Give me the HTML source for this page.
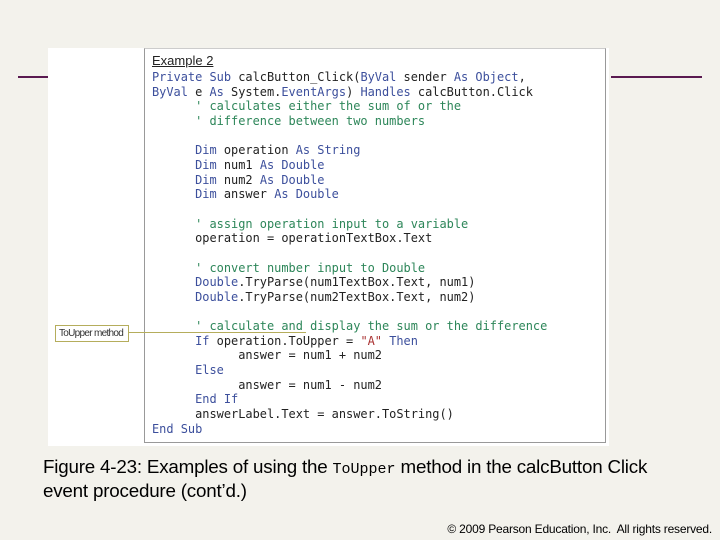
<!DOCTYPE html>
<html><head><style>
body{margin:0;width:720px;height:540px;background:#f3f2ec;position:relative;overflow:hidden;font-family:"Liberation Sans",sans-serif}
.pl{position:absolute;height:2px;background:#5a1a50;top:76px}
#img{position:absolute;left:48px;top:48px;width:561px;height:398px;background:#fff}
#box{position:absolute;left:144px;top:48px;width:460px;height:393px;border:1px solid #999;border-top-color:#ccc;background:#fff}
pre{position:absolute;left:152px;top:70px;margin:0;font-family:"DejaVu Sans Mono",monospace;font-size:11.95px;line-height:14.65px;color:#222}
.k{color:#3c4f9c}.c{color:#2d8659}
#ex{position:absolute;left:152px;top:53px;font-size:13px;color:#222;text-decoration:underline}
#lab{position:absolute;left:55px;top:325px;width:69px;height:15px;border:1px solid #b5ad5c;font-size:10px;line-height:15px;padding-left:3px;box-sizing:content-box;color:#333;background:#fff;letter-spacing:-0.7px;white-space:nowrap;overflow:hidden}
#ln{position:absolute;left:128px;top:332px;width:178px;height:1px;background:#b5ad5c}
.cap{position:absolute;left:43px;font-size:18.8px;color:#000;letter-spacing:-0.2px;white-space:nowrap}
</style></head><body>
<div class="pl" style="left:18px;width:30px"></div>
<div class="pl" style="left:611px;width:91px"></div>
<div id="img"></div>
<div id="box"></div>
<div id="ex">Example 2</div>
<pre><span class="k">Private Sub</span> calcButton_Click(<span class="k">ByVal</span> sender <span class="k">As Object</span>,
<span class="k">ByVal</span> e <span class="k">As</span> System.<span class="k">EventArgs</span>) <span class="k">Handles</span> calcButton.Click
      <span class="c">' calculates either the sum of or the</span>
      <span class="c">' difference between two numbers</span>

      <span class="k">Dim</span> operation <span class="k">As String</span>
      <span class="k">Dim</span> num1 <span class="k">As Double</span>
      <span class="k">Dim</span> num2 <span class="k">As Double</span>
      <span class="k">Dim</span> answer <span class="k">As Double</span>

      <span class="c">' assign operation input to a variable</span>
      operation = operationTextBox.Text

      <span class="c">' convert number input to Double</span>
      <span class="k">Double</span>.TryParse(num1TextBox.Text, num1)
      <span class="k">Double</span>.TryParse(num2TextBox.Text, num2)

      <span class="c">' calculate and display the sum or the difference</span>
      <span class="k">If</span> operation.ToUpper = <span style="color:#a33">"A"</span> <span class="k">Then</span>
            answer = num1 + num2
      <span class="k">Else</span>
            answer = num1 - num2
      <span class="k">End If</span>
      answerLabel.Text = answer.ToString()
<span class="k">End Sub</span></pre>
<div id="ln"></div>
<div id="lab">ToUpper method</div>
<div class="cap" style="top:456px">Figure 4-23: Examples of using the <span style="font-family:'Liberation Mono',monospace;font-size:15px;letter-spacing:0">ToUpper</span> method in the calcButton Click</div>
<div class="cap" style="top:480px">event procedure (cont’d.)</div>
<div style="position:absolute;right:8px;top:522px;font-size:12px;color:#000;letter-spacing:-0.2px">© 2009 Pearson Education, Inc.&nbsp; All rights reserved.</div>
</body></html>
